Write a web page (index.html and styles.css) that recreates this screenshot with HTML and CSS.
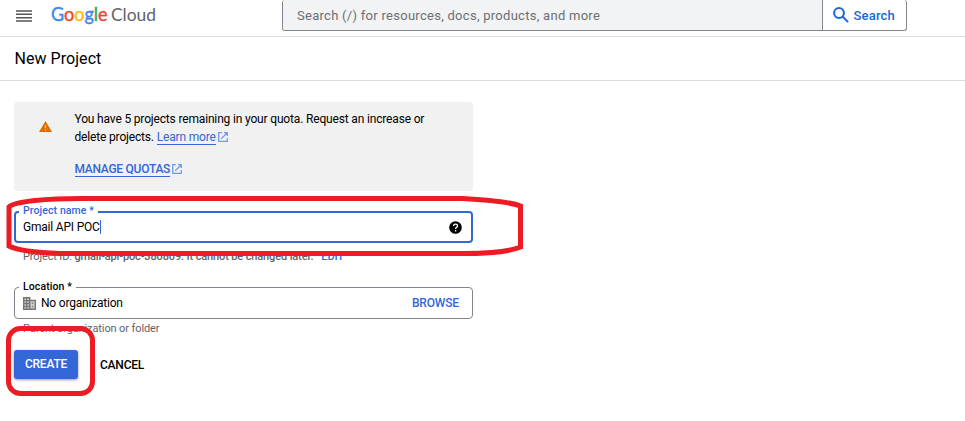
FILE: index.html
```html
<!DOCTYPE html>
<html lang="en">
<head>
<meta charset="utf-8">
<title>New Project</title>
<link rel="stylesheet" href="styles.css">
</head>
<body>
<header class="topbar">
  <svg class="menu" width="16" height="12" viewBox="0 0 16 12"><path d="M0 1h16M0 4.3h16M0 7.7h16M0 11h16" stroke="#555" stroke-width="1.5"/></svg>
  <svg class="logo" width="108" height="26" viewBox="0 0 108 26" role="img" aria-label="Google Cloud">
    <text x="0" y="19" textLength="56.5" lengthAdjust="spacingAndGlyphs" class="google"><tspan fill="#4285f4" stroke="#4285f4">G</tspan><tspan fill="#ea4335" stroke="#ea4335">o</tspan><tspan fill="#fbbc04" stroke="#fbbc04">o</tspan><tspan fill="#4285f4" stroke="#4285f4">g</tspan><tspan fill="#34a853" stroke="#34a853">l</tspan><tspan fill="#ea4335" stroke="#ea4335">e</tspan></text>
    <text x="60" y="19" textLength="45" lengthAdjust="spacingAndGlyphs" class="cloud">Cloud</text>
  </svg>
  <div class="search">
    <div class="search-input"><span>Search (/) for resources, docs, products, and more</span></div>
    <div class="search-button">
      <svg width="16" height="16" viewBox="0 0 16 16" fill="none" stroke="#1967d2" stroke-width="2"><circle cx="6" cy="6" r="4.9"/><path d="M9.5 9.5l5.6 5.6"/></svg>
      <span>Search</span>
    </div>
  </div>
</header>
<div class="titlebar"><h1>New Project</h1></div>
<main>
  <section class="notice">
    <svg class="warn" width="13" height="11" viewBox="0 0 12 11" preserveAspectRatio="none"><path d="M6 0l6 11H0z" fill="#e06c00"/><path d="M6 4.2v3M6 8.2v1.3" stroke="#f3c08f" stroke-width="1.2"/></svg>
    <div class="notice-body">
      <p><span>You have 5 projects remaining in your quota. Request an increase or</span><br><span>delete projects. <a>Learn more</a></span><svg class="ext" width="10" height="10" viewBox="0 0 10 10"><path d="M4 .7H.7v8.6h8.6V6M6 .7h3.3V4M9.3.7L3.2 6.8"/></svg></p>
      <p class="quotas"><a>MANAGE QUOTAS</a><svg class="ext" width="10" height="10" viewBox="0 0 10 10"><path d="M4 .7H.7v8.6h8.6V6M6 .7h3.3V4M9.3.7L3.2 6.8"/></svg></p>
    </div>
  </section>
  <div class="field focused">
    <span class="label">Project name *</span>
    <span class="value">Gmail API POC</span><i class="caret"></i>
    <span class="help"><svg width="13" height="13" viewBox="0 0 13 13"><circle cx="6.5" cy="6.5" r="6.3"/><path d="M4.6 5c0-2.6 3.9-2.5 3.9-.1C8.5 6.3 6.6 6.4 6.6 8M6.6 9.1v1.4" fill="none" stroke="#fff" stroke-width="1.4"/></svg></span>
  </div>
  <p class="hint"><span class="pid">Project ID: <b>gmail-api-poc-380809. It cannot be changed later.</b></span><a>EDIT</a></p>
  <div class="field location">
    <span class="label">Location *</span>
    <svg width="13" height="13" viewBox="0 0 13 12" preserveAspectRatio="none" fill="none" stroke="#757575"><path fill="#d0d0d0" stroke-width="1.4" d="M.7.7h6v10.600h-6zM6.700 3.200h5.600v8.100H6.700z"/><path stroke-width="1.200" d="M3.700 1v10M1 3.300h6M1 6h6M1 8.700h6M9.500 5v1.500M9.500 8v1.500"/></svg>
    <span class="value">No organization</span>
    <span class="browse">BROWSE</span>
  </div>
  <p class="hint folder"><span>Parent organization or folder</span></p>
  <div class="actions"><button class="create">CREATE</button><button class="cancel">CANCEL</button></div>
</main>
<svg class="marks" width="965" height="421" viewBox="0 0 965 421">
  <path d="M9 207Q12 203 35 200.500Q55 198.500 80 198.500H462Q508 201 520.500 206V247Q505 253.500 465 253.500H60Q20 252 9 246Z"/>
  <rect x="8.500" y="328.500" width="84" height="65" rx="12"/>
</svg>
</body>
</html>
```

FILE: styles.css
```css
* { box-sizing: border-box; }
body { margin: 0; height: 421px; overflow: hidden; background: #fff; color: #000; font-family: Roboto, sans-serif; font-size: 12px; }
p, h1 { margin: 0; font-weight: 400; }
svg { flex: none; }
span, a { white-space: nowrap; }
.topbar { display: flex; height: 37px; border-bottom: 1px solid #dadce0; }
.menu { margin: 10px 0 0 16px; }
.logo { margin: 2px 0 0 19px; }
.logo text { font-family: Lato, sans-serif; }
.google { font-size: 19px; stroke-width: .4; }
.cloud { fill: #5f6368; font-size: 18px; }
.search { display: flex; width: 625px; height: 31px; margin-left: 123px; border: 1px solid #80868b; border-top: 0; border-radius: 3px; overflow: hidden; }
.search-input { flex: none; width: 540px; padding-left: 14px; line-height: 31px; background: #f1f3f4; color: #6b6f73; border-right: 1px solid #80868b; font-size: 13px; letter-spacing: .28px; }
.search-button { display: flex; align-items: center; gap: 5px; padding-left: 9.5px; color: #1967d2; font-size: 13px; font-weight: 500; letter-spacing: .2px; }
.titlebar { height: 44px; border-bottom: 1px solid #dadce0; padding-left: 14.5px; }
h1 { font-size: 16px; line-height: 43px; letter-spacing: .05px; }
main { padding: 21px 14px 0; width: 487px; }
.notice { display: flex; height: 89px; background: #f1f1f1; border-radius: 3px; }
.warn { margin: 19px 0 0 25px; }
.notice-body { margin-left: 22.5px; padding-top: 8px; line-height: 18px; letter-spacing: -.165px; }
a { color: #3367d6; }
.notice a { border-bottom: 1px solid #3367d6; }
.ext { margin-left: 2px; vertical-align: -1px; fill: none; stroke: #729be8; stroke-width: 1.3; }
.quotas { margin-top: 14px; font-weight: 500; letter-spacing: -.27px; }
.field { position: relative; display: flex; align-items: center; height: 32px; padding-left: 8px; border: 1px solid #80868b; border-radius: 4px; }
.focused { margin-top: 20px; border: 2px solid #3367d6; padding-left: 7px; }
.label { position: absolute; top: -8px; left: 4px; padding: 0 4px; background: #fff; font-size: 10.500px; line-height: 13px; font-weight: 500; letter-spacing: .1px; }
.focused .label { top: -9px; left: 3px; color: #3367d6; letter-spacing: .1px; }
.value { letter-spacing: -.2px; }
.caret { width: 1px; height: 14px; background: #3367d6; }
.help { display: flex; margin-left: auto; margin-right: 9.5px; }
.hint { height: 13px; margin: 7px 0 0 9px; color: #5f6368; font-size: 11px; line-height: 13px; letter-spacing: -.11px; }
.pid { letter-spacing: -.13px; }
.hint b, .hint a { font-weight: 500; }
.hint a { margin-left: 8px; }
.location { margin-top: 24px; }
.location .value { margin-left: 5px; }
.browse { margin-left: auto; margin-right: 13px; color: #3367d6; font-weight: 500; letter-spacing: -.15px; }
.folder { margin-top: 3px; }
.actions { display: flex; margin-top: 15px; gap: 22px; }
button { height: 29px; padding: 0; border: 0; background: none; font: 500 12px Roboto, sans-serif; letter-spacing: -.22px; }
.create { width: 64px; padding-bottom: 2px; border-radius: 3px; background: #3367d6; color: #fff; box-shadow: 0 1px 3px #0006; }
.marks { position: absolute; top: 0; left: 0; fill: none; stroke: #ed1c24; stroke-width: 5; }
```
